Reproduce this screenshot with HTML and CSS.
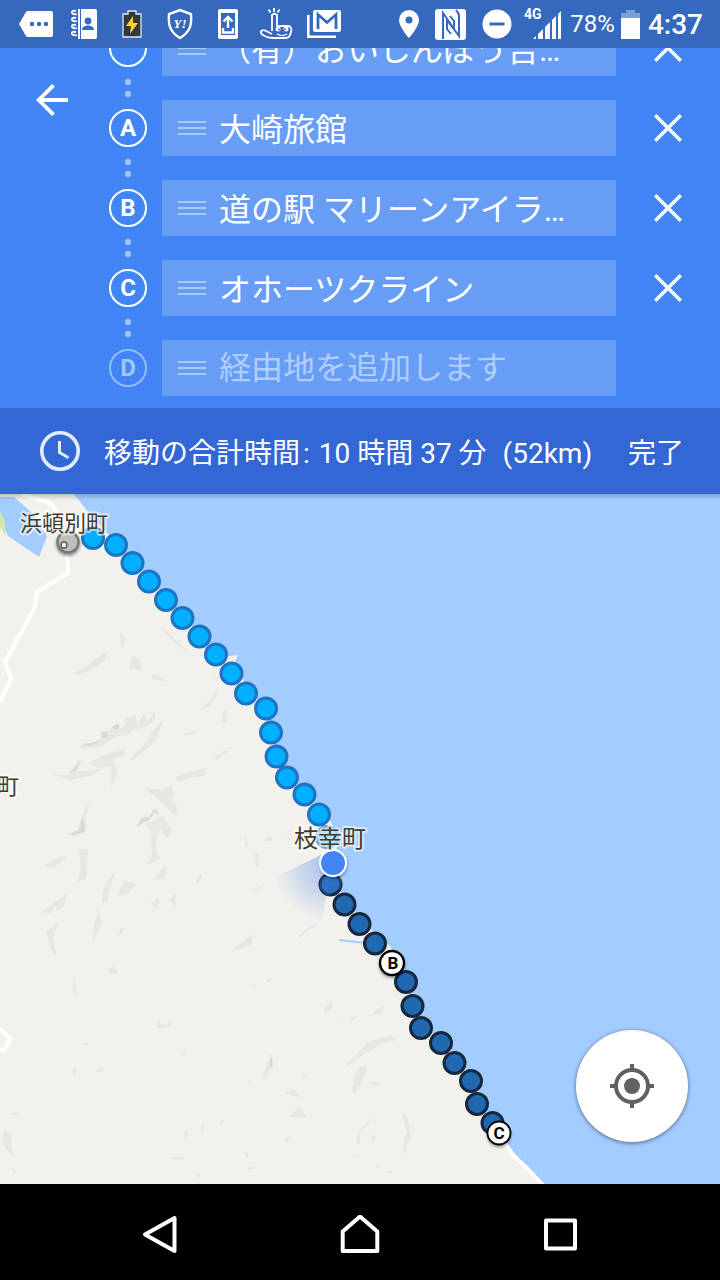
FILE: index.html
```html
<!DOCTYPE html>
<html lang="ja">
<head>
    <meta charset="UTF-8">
    <meta name="viewport" content="width=device-width, initial-scale=1.0">
    <title>経路</title>
    <link rel="stylesheet" href="styles.css">
</head>
<body>
    <div class="status-bar">
        <div class="notifications">
            <svg width="48" height="48" viewBox="0 0 48 48"><path fill="#fff" d="M16 11h23a2 2 0 0 1 2 2v22a2 2 0 0 1-2 2H16a3 3 0 0 1-2-1L7 24l7-12a3 3 0 0 1 2-1z"/><g fill="#3469bd"><circle cx="20" cy="24" r="2.2"/><circle cx="27" cy="24" r="2.2"/><circle cx="34" cy="24" r="2.2"/></g></svg>
            <svg width="48" height="48" viewBox="0 0 48 48"><path fill="#fff" d="M18 9h17a2 2 0 0 1 2 2v26a2 2 0 0 1-2 2H18z"/><path fill="none" stroke="#fff" stroke-width="1.8" d="M16 11q-5-1-4 2 2 2 5 1M16 18q-5-1-4 2 2 2 5 1M16 25q-5-1-4 2 2 2 5 1M16 32q-5-1-4 2 2 2 5 1"/><path stroke="#3469bd" d="M20.500 9v30"/><circle cx="28" cy="21" r="3.400" fill="#3469bd"/><path fill="#3469bd" d="M22 30c0-6 12-6 12 0z"/></svg>
            <svg width="48" height="48" viewBox="0 0 48 48"><path fill="#36393b" stroke="#dfe8f5" stroke-width="1.300" d="M20 11h8v3h5v23H15V14h5z"/><path fill="#fcd233" d="M25 16l-7 10h5l-1 8 8-11h-5z"/></svg>
            <svg width="48" height="48" viewBox="0 0 48 48"><path fill="none" stroke="#fff" stroke-width="2.400" d="M24 10l11 4c1 11-1 18-11 24-10-6-12-13-11-24z"/><text class="shield-text" x="24" y="28" text-anchor="middle">Y!</text></svg>
            <svg width="48" height="48" viewBox="0 0 48 48"><path fill="#fff" fill-rule="evenodd" d="M16 9h16a2 2 0 0 1 2 2v26a2 2 0 0 1-2 2H16a2 2 0 0 1-2-2V11a2 2 0 0 1 2-2zm1 4v22h14V13z"/><path fill="none" stroke="#fff" stroke-width="2.400" d="M24 28V17M19.500 21.500L24 17l4.500 4.500M19 28v4.500h10V28"/></svg>
            <svg width="48" height="48" viewBox="0 0 48 48"><path fill="none" stroke="#fff" stroke-width="1.800" stroke-linejoin="round" d="M20 31V15q2.500-2.500 5 0v11h11c3 0 4 3 3 6s-1 6-6 6H21c-6 0-11-3-12-5s2-4 5-2l6 3"/><g stroke="#fff" stroke-width="1.800"><path d="M22 8v4M16.500 9.500l2 3M27.500 9.500l-2 3"/></g><g fill="#fff"><circle cx="26" cy="29" r="2.500"/><circle cx="34" cy="29" r="2.500"/></g><circle cx="27" cy="29.500" r="1" fill="#3469bd"/><circle cx="33" cy="29.500" r="1" fill="#3469bd"/><path fill="none" stroke="#fff" stroke-width="1.200" d="M25 34q5 3 10 0"/></svg>
            <svg width="48" height="48" viewBox="0 0 48 48"><path fill="none" stroke="#fff" stroke-width="2.600" d="M8.300 15v21.700H36"/><rect x="13" y="10" width="28" height="22" rx="2" fill="#fff"/><path fill="none" stroke="#3469bd" stroke-width="2.800" d="M18 29V14.500l9 8 9-8V29"/></svg>
        </div>
        <div class="system">
            <svg width="20" height="30" viewBox="0 0 20 30"><path fill="#fff" fill-rule="evenodd" d="M10 1a10 10 0 0 1 10 10c0 7-10 18-10 18S0 18 0 11A10 10 0 0 1 10 1zm0 6.500a3.500 3.500 0 1 0 0 7 3.500 3.500 0 0 0 0-7z"/></svg>
            <svg width="31" height="31" viewBox="0 0 31 31"><rect width="31" height="31" rx="3" fill="#fff"/><path fill="none" stroke="#3469bd" stroke-width="2" d="M8 30V4l11 16v-8l-4-5M21 1c2 2 3 3 3 6v20L12 11v9l4 5"/></svg>
            <svg width="30" height="30" viewBox="0 0 30 30"><circle cx="15" cy="15" r="14.500" fill="#fff"/><path stroke="#3469bd" stroke-width="3" d="M7.500 15h15"/></svg>
            <svg class="signal" width="38" height="32" viewBox="0 0 38 32"><text class="network" x="0" y="11">4G</text><path fill="#fff" d="M9 31l3-3v3zM14 26l5-5v10h-5zM21 19l5-5v17h-5zM28 12l4-4v23h-4zM34 6l3-3v28h-3z"/></svg>
            <span class="percent">78%</span>
            <svg width="19" height="30" viewBox="0 0 19 30"><path fill="#7f9fd3" d="M5 1h9v3h5v5H0V4h5z"/><path fill="#fff" d="M0 9h19v21H0z"/></svg>
            <span class="clock">4:37</span>
        </div>
    </div>

    <header class="directions">
        <button type="button" class="back" aria-label="戻る">
            <svg width="32" height="32" viewBox="0 0 32 32"><path fill="none" stroke="#fff" stroke-width="3.800" d="M32 16H3M17.500 1.300L2.700 16l14.800 14.700"/></svg>
        </button>
        <ul class="stops">
            <li class="stop">
                <label class="marker" for="stop0"></label>
                <div class="field">
                    <span class="handle"></span>
                    <input type="text" id="stop0" value="（有）おいしんぼう吉…" aria-label="出発地">
                </div>
                <button type="button" class="remove" aria-label="削除"><svg width="28" height="28" viewBox="0 0 28 28"><path stroke="#fff" stroke-width="3.400" d="M1.200 1.200l25.600 25.600M26.800 1.200L1.200 26.800"/></svg></button>
            </li>
            <li class="link"></li>
            <li class="stop">
                <label class="marker" for="stopA">A</label>
                <div class="field">
                    <span class="handle"></span>
                    <input type="text" id="stopA" value="大崎旅館">
                </div>
                <button type="button" class="remove" aria-label="削除"><svg width="28" height="28" viewBox="0 0 28 28"><path stroke="#fff" stroke-width="3.400" d="M1.200 1.200l25.600 25.600M26.800 1.200L1.200 26.800"/></svg></button>
            </li>
            <li class="link"></li>
            <li class="stop">
                <label class="marker" for="stopB">B</label>
                <div class="field">
                    <span class="handle"></span>
                    <input type="text" id="stopB" value="道の駅 マリーンアイラ…">
                </div>
                <button type="button" class="remove" aria-label="削除"><svg width="28" height="28" viewBox="0 0 28 28"><path stroke="#fff" stroke-width="3.400" d="M1.200 1.200l25.600 25.600M26.800 1.200L1.200 26.800"/></svg></button>
            </li>
            <li class="link"></li>
            <li class="stop">
                <label class="marker" for="stopC">C</label>
                <div class="field">
                    <span class="handle"></span>
                    <input type="text" id="stopC" value="オホーツクライン">
                </div>
                <button type="button" class="remove" aria-label="削除"><svg width="28" height="28" viewBox="0 0 28 28"><path stroke="#fff" stroke-width="3.400" d="M1.200 1.200l25.600 25.600M26.800 1.200L1.200 26.800"/></svg></button>
            </li>
            <li class="link"></li>
            <li class="stop stop-new">
                <label class="marker" for="stopD">D</label>
                <div class="field">
                    <span class="handle"></span>
                    <input type="text" id="stopD" placeholder="経由地を追加します">
                </div>
            </li>
        </ul>
    </header>

    <div class="summary">
        <svg width="40" height="40" viewBox="0 0 40 40"><circle cx="20" cy="20" r="18.200" fill="none" stroke="#e3edfd" stroke-width="3.600"/><path fill="none" stroke="#e3edfd" stroke-width="3" d="M19.500 10v11.500l9 5.300"/></svg>
        <p class="total"><span>移動の合計時間</span><span class="colon">:</span><span>10 時間 37 分</span><span class="distance">(52km)</span></p>
        <button type="button" class="done">完了</button>
    </div>

    <main class="map">
        <svg class="map-canvas" viewBox="0 494 720 690" preserveAspectRatio="xMidYMid slice">
            <defs>
                <radialGradient id="beam" gradientUnits="userSpaceOnUse" cx="333" cy="863" r="60">
                    <stop offset="0.100" stop-color="#4a80f0" stop-opacity="0.450"/>
                    <stop offset="1" stop-color="#4a80f0" stop-opacity="0"/>
                </radialGradient>
                <filter id="soft" x="-50%" y="-50%" width="200%" height="200%"><feGaussianBlur stdDeviation="1.500"/></filter>
                <filter id="terrain"><feGaussianBlur stdDeviation="0.700"/></filter>
            </defs>
            <rect x="-400" y="94" width="1600" height="1600" fill="#a3ccff"/>
            <!-- land -->
            <path fill="#f2f1ec" d="M-400 494H74L88 512 107 533 122 548 150 580 200 635 222 657 238 655 235 662 248 690 264 706 270 732 278 756 292 778 310 797 321 814 332 823 337 845 334 880 348 903 366 925 390 946 406 975 414 1005 426 1030 446 1043 461 1063 476 1081 481 1103 500 1130 514 1155 526 1167 543 1184V1700H-400z"/>
            <path fill="#a3ccff" d="M0 497L14 497 32 513 47 536 39 557 8 536 0 518z"/>
            <path fill="#cdeaad" d="M0 511L5 522 6 537 0 527z"/>
            <path fill="none" stroke="#a3ccff" stroke-width="2" d="M339 940L366 943"/>
            <!-- relief -->
            <g fill="#e4e3df" opacity="0.700" filter="url(#terrain)">
                <path d="M71 673q16-4 24-14l13-8-4 10-14 10q-10 5-19 2z"/>
                <path d="M133 656l5 1 5 14-14-3zM120 631l6 8-3 10-3-6zM151 674l8 1 7 6-13-1zM162 627l26 25-8-5-16-15z"/>
                <path d="M212 670l7 15-8 14-11 11 9-3 7-10 2-16zM222 713l5-3-1 12-4-1z"/>
                <path d="M80 745l12-1 10-7 14-14 4 6 10-7-2 12-15 4-11 8-21 2z"/>
                <path d="M130 762l25-20 10-24-14 15-4 9-13 12z"/>
                <path d="M50 774l20 2 11-15-11 4 11-6-7 11 9 1 20-2-12 7-22 4zM88 763l21-10 16-4-1 7-12 3 6 13-7 15v-20l-12 1z"/>
                <path d="M125 719l10-4 3 9 6-11 3 9 9-12-2 12-10 6-10 1-8 8zM184 733l13-2-3 3-12 1z"/>
                <path d="M145 788l18 2 8-4 4 9-5 2 7 10-1 11-12-14-5-4zM175 777l10-4 13-3 10-3-5 9-12 1-12 5zM214 757l9-6 8 0-9 3-5 6z"/>
                <path d="M66 834l12-4 4-14 10-18-6 18 0 16-10 5zM136 826l14-6 8-14-6 6-2 4-6-1zM146 824l5 8 1 22-5 10 14-5-5-7 1-17 4-5 6 9 5-9-10-14z"/>
                <path d="M45 865l17-10 4 3-13 10zM79 850l9-1-2 30-9 3 4-12zM102 893l6-13 8-9-7 20-2 11-5 1zM117 896l7-15 13 3-10 10-11 3zM155 876l11-10-1 12-9 2z"/>
                <path d="M42 912l12-9 13-10-3 14-7 4-2-7-5 9zM46 932l13-11-6 18 4 18-7-9-2-10zM98 908l4 15-5 10-5 10 3-22zM120 929l5-1-6 9zM150 904l8-6 2 4-4 6zM168 900l8-6-1 13-4-6z"/>
                <path d="M244 833l4 13-2 2zM262 840l9-4 1 5zM287 834l4 8-3-2zM255 854l3 0 0 13-3-2zM196 880l5-7 1 4-4 7zM251 891l12-6-1 3-9 4z"/>
                <path d="M235 948l18-14-1 10-16 6zM298 937l11-10 10-4-13 9-5 6zM108 970l6-5 4 8-8 1zM73 978l3 8 0 8-3-2zM156 1024l3-5 2 5 6 2 3-8v8l-4 2h-9zM324 1013l9-14-2 10-6 5zM265 981l7-4-2 5zM250 987l10-2-7 3z"/>
                <path d="M263 1075l7-20 2 0 0 12-5 10-3 5zM285 1093l9-3 8 8zM289 1117l10-10 8 10zM302 1078l7-6-5 7zM247 1083l6-5-3 5zM82 1044l7-1-4 2zM96 1070l4-4 4 3-4 4zM72 1070l4-3 1 6-3 3zM181 1053l5-1-3 4z"/>
                <path d="M4 1131l8 2-1 13 4 12-9-9-4-9zM12 1114l8-2-6 4zM12 1166l5 8-4-1zM171 1157l13 0v3l-14-1zM184 1130l5 3-3 6zM201 1128l4-5-2 8zM220 1123l5-5-3 8zM246 1167l12 1-9 2zM244 1150l5 5-2 5zM284 1140l5-5-1 8zM195 1173l6 1-2 4z"/>
                <path d="M345 1065l12-11 12-13 22-5 6 4-12 2-19 11-18 13zM354 1076l5-9 7-1 0 7-5 9-6 12-3-3zM324 1010l8-10-4 10zM337 1023l5-3-3 4zM350 1018l10-3-8 5zM373 1012l11-6-3 8-7 1zM367 1082l15 0-6 4z"/>
                <path d="M358 1133l16-17-4 6-10 10 0 12-4-1zM401 1113l6 3 4 21-5 10-2 11 0-19 3-7zM371 1134l5 4-4 4zM351 1156l8-1 2 2-8 1zM376 1165l4 2-2 2zM386 1172l7-2-3 3z"/>
            </g>
            <g fill="#cfcfcb" opacity="0.600" filter="url(#terrain)">
                <path d="M101 732l6-1 1 7-6 0zM113 726l6-2 0 5-5 0zM67 775l14-15-4 10zM81 744l10-1 11-3-12 6zM137 828l4-9 6-2 4 2-9 4zM150 815l5-7 4 5-2 2-2-3-5 6zM82 817l3 9-1 6-15 3 11-6zM270 1060l2-3 1 10-3 0z"/>
            </g>
            <!-- roads -->
            <g fill="none" stroke="#fff" stroke-width="4" stroke-linejoin="round">
                <path d="M22 494L50 503 62 518 67 552 68 573 37 592 35 607 5 662 11 679 0 702"/>
                <path d="M0 1029L11 1039 4 1050 -2 1049"/>
                <path d="M504 1142L514 1156 528 1169 543 1185"/>
            </g>
            <path fill="url(#beam)" d="M333 849L270 880 290 925 322 922z"/>
            <g class="route-near">
                <circle cx="93" cy="538" r="10.500"/><circle cx="116" cy="545" r="10.500"/><circle cx="132.500" cy="563" r="10.500"/><circle cx="149" cy="581.500" r="10.500"/><circle cx="166" cy="600" r="10.500"/><circle cx="182.500" cy="618" r="10.500"/><circle cx="199.500" cy="636.500" r="10.500"/><circle cx="216" cy="654.500" r="10.500"/><circle cx="231.500" cy="673.500" r="10.500"/><circle cx="246" cy="693.500" r="10.500"/><circle cx="266" cy="708.500" r="10.500"/><circle cx="271" cy="732.500" r="10.500"/><circle cx="276.500" cy="756.500" r="10.500"/><circle cx="287" cy="777.500" r="10.500"/><circle cx="304.500" cy="794.500" r="10.500"/><circle cx="319" cy="814.500" r="10.500"/><circle cx="327" cy="837" r="10.500" opacity="0.650"/>
            </g>
            <g class="route-far">
                <circle cx="330.500" cy="884.500" r="10.500"/><circle cx="344.500" cy="904.500" r="10.500"/><circle cx="359.500" cy="924" r="10.500"/><circle cx="375" cy="943.500" r="10.500"/><circle cx="406" cy="982" r="10.500"/><circle cx="412.500" cy="1006" r="10.500"/><circle cx="421" cy="1028" r="10.500"/><circle cx="441" cy="1043" r="10.500"/><circle cx="454.500" cy="1063" r="10.500"/><circle cx="471" cy="1081" r="10.500"/><circle cx="477" cy="1104" r="10.500"/><circle cx="492.500" cy="1123" r="10.500"/>
            </g>
            <path fill="#4a80f0" opacity="0.300" d="M321 876h20v12l-14 8-8-8z"/>
            <!-- starting point -->
            <circle cx="68" cy="544" r="12" fill="#000" opacity="0.400" filter="url(#soft)"/>
            <circle cx="68" cy="542" r="10.500" fill="#bdbdbd" stroke="#777" stroke-width="2.400"/>
            <circle cx="64" cy="545" r="3" fill="#fff" stroke="#555" stroke-width="1.400"/>
            <!-- current location -->
            <circle cx="334" cy="865" r="14" fill="#000" opacity="0.250" filter="url(#soft)"/>
            <circle cx="333" cy="863" r="13" fill="#4285f4" stroke="#fff" stroke-width="2"/>
            <circle cx="392" cy="965" r="13" opacity="0.400" filter="url(#soft)"/>
            <circle cx="392" cy="963" r="12" fill="#fff" stroke="#000" stroke-width="2.400"/>
            <text class="pin-letter" x="393" y="969">B</text>
            <circle cx="499" cy="1135" r="12" opacity="0.400" filter="url(#soft)"/>
            <circle cx="499" cy="1133" r="11.500" fill="#fff" stroke="#000" stroke-width="1.800"/>
            <text class="pin-letter" x="499" y="1139">C</text>
            <g class="place">
                <text x="64" y="531">浜頓別町</text>
                <text class="place-town" x="330" y="847">枝幸町</text>
                <text x="8" y="794">町</text>
            </g>
        </svg>
        <button type="button" class="locate" aria-label="現在地">
            <svg width="44" height="44" viewBox="0 0 44 44"><g fill="none" stroke="#616161" stroke-width="4"><circle cx="22" cy="22" r="16"/><path d="M22 0v6M22 38v6M0 22h6M38 22h6"/></g><circle cx="22" cy="22" r="8" fill="#616161"/></svg>
        </button>
    </main>

    <nav class="nav-bar">
        <button type="button" aria-label="戻る"><svg width="40" height="40" viewBox="0 0 40 40"><path d="M5 19.500L34.500 3v33z"/></svg></button>
        <button type="button" aria-label="ホーム"><svg width="40" height="40" viewBox="0 0 40 40"><path d="M2.700 36V16.500L20 1.500l17.300 15V36z"/></svg></button>
        <button type="button" aria-label="アプリ履歴"><svg width="40" height="40" viewBox="0 0 40 40"><path d="M6 5.500h29v28H6z"/></svg></button>
    </nav>
</body>
</html>
```
FILE: styles.css
```css
* {
    margin: 0;
    padding: 0;
    box-sizing: border-box;
}

body {
    display: flex;
    flex-direction: column;
    min-height: 100vh;
    font-family: Roboto, "Noto Sans CJK JP", sans-serif;
    color: #fff;
    background: #4285f4;
}

svg {
    display: block;
}

button {
    display: flex;
    align-items: center;
    justify-content: center;
    border: none;
    background: none;
    color: inherit;
    font: inherit;
    cursor: pointer;
}

/* Status bar */
.status-bar {
    display: flex;
    justify-content: space-between;
    height: 48px;
    padding: 0 17px 0 12px;
    background: #3469bd;
}

.notifications {
    display: flex;
}

.system {
    display: flex;
    align-items: center;
    gap: 8px;
}

.system svg:nth-child(-n+2) {
    margin-right: 8px;
}

.system svg:nth-child(3) {
    margin-right: 4px;
}

.signal {
    overflow: visible;
}

.shield-text {
    font: italic bold 13px "Liberation Serif", serif;
    fill: #fff;
}

.network {
    font-size: 14px;
    font-weight: 700;
    fill: #fff;
}

.percent {
    margin-right: -2px;
    font-size: 24px;
}

.clock {
    font-size: 28px;
    font-weight: 500;
}

/* Directions */
.directions {
    display: flex;
    align-items: flex-start;
    height: 360px;
    overflow: hidden;
}

.back {
    flex-shrink: 0;
    width: 104px;
    height: 104px;
}

.stops {
    display: flex;
    flex: 1;
    flex-direction: column;
    justify-content: flex-end;
    min-width: 0;
    height: 100%;
    padding: 0 0 12px 5px;
    list-style: none;
}

.stop {
    display: flex;
    flex-shrink: 0;
    align-items: center;
    height: 56px;
}

.stop-new {
    padding-right: 104px;
}

.marker {
    display: flex;
    flex-shrink: 0;
    align-items: center;
    justify-content: center;
    width: 38px;
    height: 38px;
    margin-right: 15px;
    border: 2px solid #fff;
    border-radius: 50%;
    font-size: 24px;
    font-weight: 700;
}

.stop-new .marker {
    border-color: #94bbfa;
    color: #a4c5fb;
}

.field {
    display: flex;
    flex: 1;
    align-items: center;
    gap: 13px;
    min-width: 0;
    height: 56px;
    padding: 0 16px;
    background: #689df6;
}

.handle {
    flex-shrink: 0;
    width: 28px;
    height: 14px;
    border-top: 2px solid #a8cafc;
    border-bottom: 2px solid #a8cafc;
    background: linear-gradient(#a8cafc, #a8cafc) center / 100% 2px no-repeat;
}

.field input {
    flex: 1;
    min-width: 0;
    height: 56px;
    padding-bottom: 3px;
    border: none;
    outline: none;
    background: none;
    color: #fff;
    font-family: inherit;
    font-size: 32px;
    text-overflow: ellipsis;
}

.field input::placeholder {
    color: #b0cefb;
    opacity: 1;
}

.stop-new .field input {
    padding-bottom: 0;
}

.remove {
    flex-shrink: 0;
    width: 104px;
    height: 56px;
}

.link {
    display: flex;
    flex-shrink: 0;
    flex-direction: column;
    align-items: center;
    justify-content: center;
    gap: 6px;
    width: 38px;
    height: 24px;
}

.link::before,
.link::after {
    content: "";
    width: 6px;
    height: 6px;
    border-radius: 50%;
    background: #a4c6fb;
}

/* Travel time */
.summary {
    display: flex;
    align-items: center;
    height: 86px;
    padding: 0 36px 0 40px;
    background: #3367d6;
    font-size: 28px;
}

.total {
    display: flex;
    flex: 1;
    align-items: baseline;
    margin-left: 24px;
    white-space: nowrap;
}

.colon {
    margin: 0 9px 0 3px;
}

.distance {
    margin-left: 16px;
    font-family: Roboto, sans-serif;
}

/* Map */
.map {
    position: relative;
    flex: 1;
    min-height: 400px;
    overflow: hidden;
    background: #a3ccff;
}

.map-canvas {
    position: absolute;
    width: 100%;
    height: 100%;
}

.map::after {
    content: "";
    position: absolute;
    top: 0;
    left: 0;
    right: 0;
    height: 6px;
    background: linear-gradient(rgba(0, 0, 0, 0.2), rgba(0, 0, 0, 0));
}

.route-near {
    fill: #00b0ff;
    stroke: #1e73c4;
    stroke-width: 3px;
}

.route-far {
    fill: #2068b0;
    stroke: #15283e;
    stroke-width: 3px;
}

.pin-letter {
    font-size: 17px;
    font-weight: 700;
    text-anchor: middle;
    fill: #000;
}

.place {
    font-size: 22px;
    text-anchor: middle;
    fill: #403c30;
    stroke: rgba(255, 255, 255, 0.6);
    stroke-width: 4px;
    stroke-linejoin: round;
    paint-order: stroke;
}

.place-town {
    font-size: 24px;
}

.locate {
    position: absolute;
    right: 32px;
    bottom: 42px;
    width: 112px;
    height: 112px;
    border-radius: 50%;
    background: #fff;
    box-shadow: 0 1px 4px rgba(0, 0, 0, 0.5);
}

/* Navigation buttons */
.nav-bar {
    display: flex;
    justify-content: center;
    gap: 104px;
    height: 96px;
    background: #000;
}

.nav-bar button {
    width: 96px;
}

.nav-bar svg {
    margin-top: 6px;
    fill: none;
    stroke: #fff;
    stroke-width: 4px;
    stroke-linejoin: round;
}
```
